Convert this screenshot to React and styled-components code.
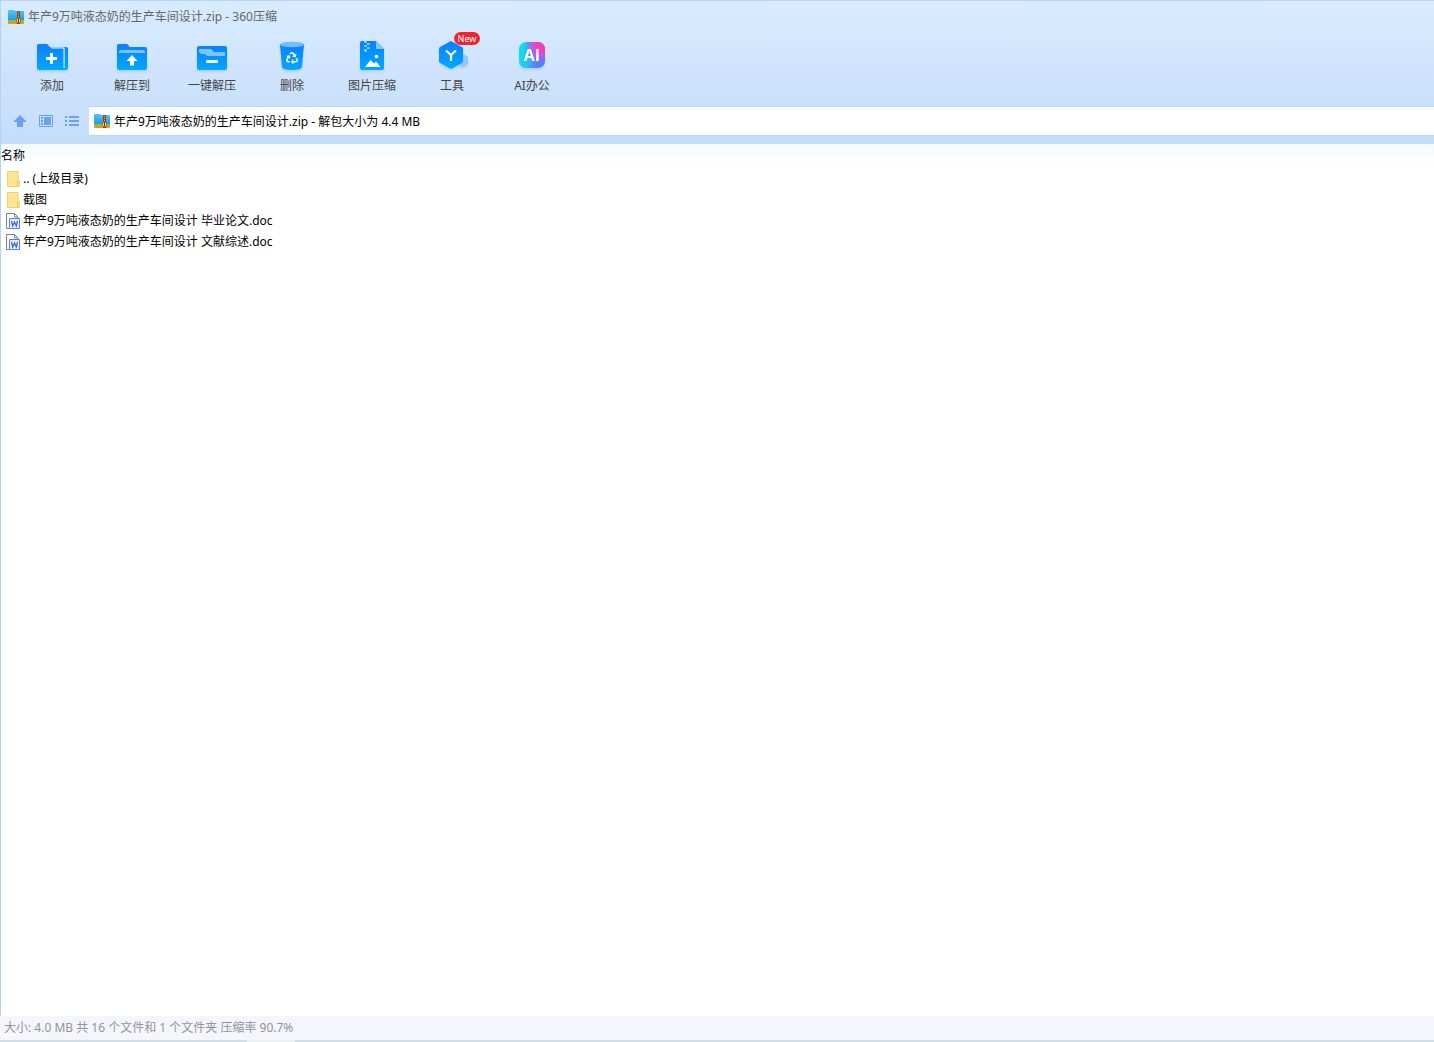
import React, { useState } from "react";
import styled, { createGlobalStyle } from "styled-components";
import { FaRecycle } from "react-icons/fa";

const GlobalStyle = createGlobalStyle`
    * {
        box-sizing: border-box;
    }
    body {
        margin: 0;
        background: #ffffff;
    }
    body, button, input, table {
        font-family: "Noto Sans", "Noto Sans CJK SC", sans-serif;
        font-size: 12px;
        line-height: 16px;
    }
`;

const Window = styled.div`
    display: flex;
    flex-direction: column;
    min-height: 100vh;
`;

const Top = styled.header`
    padding-bottom: 8px;
    border-top: 1px solid #b9d5f3;
    border-left: 1px solid #b4d2f5;
    background: linear-gradient(#d8ebff, #cae0fa 75%, #c3def9 96%);
`;

const TitleBar = styled.div`
    display: flex;
    align-items: center;
    gap: 4px;
    height: 32px;
    padding-left: 7px;
`;

const Title = styled.h1`
    margin: 0;
    font-size: 12px;
    font-weight: 400;
    color: #666666;
`;

const Toolbar = styled.nav`
    display: flex;
    height: 73px;
    padding-left: 11px;
`;

const ToolButton = styled.button`
    display: flex;
    flex-direction: column;
    align-items: center;
    gap: 4px;
    width: 80px;
    padding: 7px 0 0;
    border: 0;
    background: none;
    color: #444444;
    white-space: nowrap;
`;

const ToolIcon = styled.span`
    position: relative;
    display: block;
    width: 32px;
    height: 34px;

    > svg {
        display: block;
        filter: drop-shadow(0 2px 1px rgba(70, 140, 220, 0.2));
    }
`;

const Badge = styled.span`
    position: absolute;
    top: -8px;
    left: 18px;
    width: 26px;
    height: 13px;
    border-radius: 7px;
    background: #f5222d;
    color: #ffffff;
    font-size: 9px;
    line-height: 13px;
    text-align: center;
`;

const AddressRow = styled.div`
    display: flex;
    align-items: center;
    height: 30px;
    padding-left: 6px;
`;

const NavButton = styled.button`
    display: flex;
    align-items: center;
    justify-content: center;
    width: 26px;
    height: 26px;
    padding: 0;
    border: 0;
    background: none;
    color: #6ba2ed;
`;

const AddressBar = styled.label`
    display: flex;
    flex: 1;
    align-items: center;
    gap: 4px;
    height: 30px;
    margin-left: 4px;
    padding-left: 5px;
    border-top: 1px solid #b8d5f6;
    border-bottom: 1px solid #b8d5f6;
    background: #ffffff;
`;

const AddressInput = styled.input`
    flex: 1;
    min-width: 0;
    padding: 2px 0 0;
    border: 0;
    outline: 0;
    background: transparent;
    color: #000000;
`;

const FileArea = styled.main`
    flex: 1;
    border-left: 1px solid #b4d2f5;
    background: linear-gradient(#f3f9ff, #ffffff 20px);
`;

const FileTable = styled.table`
    width: 100%;
    border-collapse: collapse;
    color: #000000;
`;

const HeadCell = styled.th`
    height: 24px;
    padding: 0;
    font-weight: 400;
    text-align: left;
`;

const FileCell = styled.td`
    height: 21px;
    padding: 0 0 0 5px;
`;

const FileName = styled.div`
    display: flex;
    align-items: center;
    gap: 2px;
`;

const StatusBar = styled.footer`
    height: 24px;
    padding: 4px 4px 0;
    background: #f4f6fb;
    color: #949494;
`;

const BottomEdge = styled.div`
    height: 2px;
    background: linear-gradient(90deg, #cfdfe6 247px, #ebf0f3 247px, #ebf0f3 295px, #cfdfe6 295px);
`;

function ZipIcon() {
    return (
        <svg width="16" height="16" viewBox="0 0 16 16" aria-hidden="true">
            <defs>
                <linearGradient id="zipBlue" x1="0" y1="0" x2="0" y2="1">
                    <stop offset="0" stopColor="#56c4fa" />
                    <stop offset="1" stopColor="#2698ea" />
                </linearGradient>
            </defs>
            <path d="M0 2q0-1 1-1h5l1 1h8q1 0 1 1v8H0z" fill="url(#zipBlue)" />
            <path d="M0 11h16v2H0z" fill="#7ccb30" />
            <path d="M0 13h16v1q0 1-1 1H1q-1 0-1-1z" fill="#f18f22" />
            <path d="M9 2h3v13H9z" fill="#8a4a22" />
            <path d="M10.500 3v6" stroke="#e0a96c" strokeDasharray="1 1" />
            <rect x="8.500" y="9.500" width="4" height="4" rx="1" fill="#ffd763" stroke="#a2601c" />
            <path d="M10 10h1v3h-1z" fill="#5b3211" />
        </svg>
    );
}

function Gradient({ id }) {
    return (
        <defs>
            <linearGradient id={id} x1="0" y1="0" x2="0" y2="1">
                <stop offset="0" stopColor="#0a80ff" />
                <stop offset="1" stopColor="#00a8ff" />
            </linearGradient>
        </defs>
    );
}

function AddIcon() {
    return (
        <svg width="32" height="32" viewBox="0 0 32 32" aria-hidden="true">
            <Gradient id="add" />
            <path d="M1 5.500Q1 4 2.500 4H11l3 3h16q2 0 2 2v19q0 2-2 2H3q-2 0-2-2z" fill="url(#add)" />
            <path d="M14 7h13q2 0 2 2v19h-1.800V10q0-1.300-1.500-1.300H16z" fill="#8fceff" />
            <path d="M15.500 13v11M10 18.500h11" stroke="#fff" strokeWidth="2.800" />
        </svg>
    );
}

function ExtractIcon() {
    return (
        <svg width="32" height="32" viewBox="0 0 32 32" aria-hidden="true">
            <Gradient id="extract" />
            <path d="M1 5.500Q1 4 2.500 4H11l3 3h15q2 0 2 2v19q0 2-2 2H3q-2 0-2-2z" fill="url(#extract)" />
            <path d="M3 12q0-2 2-2h22q2 0 2 2v1H3z" fill="#79c3ff" />
            <path d="m16 15 5.500 6H18v4.500h-4v-4.500h-3.500z" fill="#fff" />
        </svg>
    );
}

function OneKeyIcon() {
    return (
        <svg width="32" height="32" viewBox="0 0 32 32" aria-hidden="true">
            <Gradient id="onekey" />
            <rect x="1" y="6" width="30" height="24" rx="2" fill="url(#onekey)" />
            <path d="M3 9h12l3 3h11v4H12q-2 0-3-2H5q-2-1-2-3z" fill="#79c3ff" />
            <rect x="10" y="20" width="12" height="3" rx="1" fill="#fff" />
        </svg>
    );
}

function DeleteIcon() {
    return (
        <svg width="32" height="32" viewBox="0 0 32 32" aria-hidden="true">
            <Gradient id="delete" />
            <path d="M4 4h24l-2 23q-.2 3-10 3T6 27z" fill="url(#delete)" />
            <ellipse cx="16" cy="4.500" rx="12" ry="2.800" fill="#75bdff" />
            <FaRecycle x="10" y="12" size="12" color="#ffffff" />
        </svg>
    );
}

function PictureIcon() {
    return (
        <svg width="32" height="32" viewBox="0 0 32 32" aria-hidden="true">
            <Gradient id="picture" />
            <path d="M4 3q0-2 2-2h14l8 8v19q0 2-2 2H6q-2 0-2-2z" fill="url(#picture)" />
            <path d="M20 1l8 8h-8z" fill="#80c6ff" />
            <path d="M8 1h3v2H8zm3 2h3v2h-3zM8 5h3v2H8zm3 2h3v2h-3zm-3 2h3v3H8z" fill="#79c3ff" />
            <path d="m9 27 5.500-7 3.500 3.500 2-2 4.500 5.500z" fill="#fff" />
            <circle cx="20.500" cy="16.500" r="1.800" fill="#fff" />
        </svg>
    );
}

function ToolsIcon() {
    return (
        <svg width="32" height="32" viewBox="0 0 32 32" overflow="visible" aria-hidden="true">
            <Gradient id="tools" />
            <path d="m27 14 5 3v7l-5 3-6-3v-7z" fill="#8dc8fb" />
            <path d="M14 1.500Q15 1 16 1.500L26 7q1 .6 1 2v12q0 1.400-1 2l-10 5.500q-1 .5-2 0L4 23q-1-.6-1-2V9q0-1.400 1-2z" fill="url(#tools)" />
            <path d="m10 10.500 5 4.500 5-4.500M15 15v6" fill="none" stroke="#fff" strokeWidth="2.200" />
        </svg>
    );
}

function AiIcon() {
    return (
        <svg width="32" height="32" viewBox="0 0 32 32" aria-hidden="true">
            <defs>
                <linearGradient id="aiBase" x1="0" y1="0.4" x2="1" y2="0.7">
                    <stop offset="0" stopColor="#14dcec" />
                    <stop offset="0.4" stopColor="#24c4f2" />
                    <stop offset="0.75" stopColor="#6a78ff" />
                    <stop offset="1" stopColor="#2196ff" />
                </linearGradient>
                <radialGradient id="aiPink" cx="0.9" cy="0.15" r="0.7">
                    <stop offset="0" stopColor="#ff3b99" />
                    <stop offset="0.5" stopColor="#d84be0" />
                    <stop offset="1" stopColor="#8b62f5" stopOpacity="0" />
                </radialGradient>
            </defs>
            <rect x="3" y="2" width="26" height="26" rx="7" fill="url(#aiBase)" />
            <rect x="3" y="2" width="26" height="26" rx="7" fill="url(#aiPink)" />
            <text x="16" y="21" textAnchor="middle" fill="#fff" fontFamily="Open Sans, sans-serif" fontSize="16" fontWeight="700">AI</text>
        </svg>
    );
}

function FolderIcon() {
    return (
        <svg width="15" height="16" viewBox="0 0 15 16" aria-hidden="true">
            <path d="M1 0h11.500v10H14v6H1z" fill="#ffe591" />
            <path d="M1.500.5H12v9.500h1.500v5.500h-12z" fill="none" stroke="#f2d36d" />
            <path d="M11.500 10v5.500" stroke="#e8c65c" />
        </svg>
    );
}

function DocIcon() {
    return (
        <svg width="15" height="16" viewBox="0 0 15 16" aria-hidden="true">
            <path d="M.5.500h8l3.500 3.500V15.500H.5z" fill="#fff" stroke="#7c8491" />
            <path d="M8.500.500V4H12" fill="none" stroke="#7c8491" />
            <path d="M3 5h11v11H3z" fill="#fff" />
            <path d="M3.500 5.500h10v10h-10z" fill="#e9efff" stroke="#5b80ee" />
            <path d="m5.500 8 1.200 5 1.800-4 1.800 4 1.200-5" fill="none" stroke="#3b66ea" strokeWidth="1.300" />
        </svg>
    );
}

const tools = [
    { name: "添加", Icon: AddIcon },
    { name: "解压到", Icon: ExtractIcon },
    { name: "一键解压", Icon: OneKeyIcon },
    { name: "删除", Icon: DeleteIcon },
    { name: "图片压缩", Icon: PictureIcon },
    { name: "工具", Icon: ToolsIcon, badge: "New" },
    { name: "AI办公", Icon: AiIcon },
];

const files = [
    { name: ".. (上级目录)", Icon: FolderIcon },
    { name: "截图", Icon: FolderIcon },
    { name: "年产9万吨液态奶的生产车间设计 毕业论文.doc", Icon: DocIcon },
    { name: "年产9万吨液态奶的生产车间设计 文献综述.doc", Icon: DocIcon },
];

function App() {
    const [address, setAddress] = useState("年产9万吨液态奶的生产车间设计.zip - 解包大小为 4.4 MB");

    return (
        <Window>
            <GlobalStyle />
            <Top>
                <TitleBar>
                    <ZipIcon />
                    <Title>年产9万吨液态奶的生产车间设计.zip - 360压缩</Title>
                </TitleBar>
                <Toolbar>
                    {tools.map(({ name, Icon, badge }) => (
                        <ToolButton type="button" key={name}>
                            <ToolIcon>
                                <Icon />
                                {badge && <Badge>{badge}</Badge>}
                            </ToolIcon>
                            <span>{name}</span>
                        </ToolButton>
                    ))}
                </Toolbar>
                <AddressRow>
                    <NavButton type="button" aria-label="向上">
                        <svg width="14" height="14" viewBox="0 0 14 14">
                            <path d="m7 1 7 7h-4v5H4V8H0z" fill="currentColor" />
                        </svg>
                    </NavButton>
                    <NavButton type="button" aria-label="预览">
                        <svg width="14" height="14" viewBox="0 0 14 14">
                            <path d="M.5 1.500h13v11H.5z" fill="none" stroke="currentColor" />
                            <path d="M5 3h7v8H5zM2 3h2v2H2zm0 3h2v2H2zm0 3h2v2H2z" fill="currentColor" />
                        </svg>
                    </NavButton>
                    <NavButton type="button" aria-label="列表">
                        <svg width="14" height="14" viewBox="0 0 14 14">
                            <path d="M0 2h2v2H0zm4 0h10v2H4zM0 6h2v2H0zm4 0h10v2H4zm-4 4h2v2H0zm4 0h10v2H4z" fill="currentColor" />
                        </svg>
                    </NavButton>
                    <AddressBar>
                        <ZipIcon />
                        <AddressInput aria-label="地址" value={address} onChange={(e) => setAddress(e.target.value)} />
                    </AddressBar>
                </AddressRow>
            </Top>
            <FileArea>
                <FileTable>
                    <thead>
                        <tr>
                            <HeadCell scope="col">名称</HeadCell>
                        </tr>
                    </thead>
                    <tbody>
                        {files.map(({ name, Icon }) => (
                            <tr key={name}>
                                <FileCell>
                                    <FileName>
                                        <Icon />
                                        <span>{name}</span>
                                    </FileName>
                                </FileCell>
                            </tr>
                        ))}
                    </tbody>
                </FileTable>
            </FileArea>
            <StatusBar>大小: 4.0 MB 共 16 个文件和 1 个文件夹 压缩率 90.7%</StatusBar>
            <BottomEdge />
        </Window>
    );
}

export default App;
